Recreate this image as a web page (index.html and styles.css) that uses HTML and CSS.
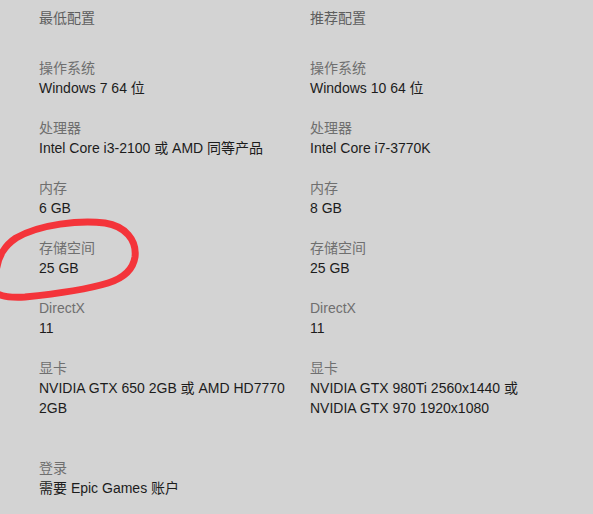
FILE: index.html
```html
<!DOCTYPE html>
<html lang="zh-CN">
<head>
  <meta charset="UTF-8">
  <title>系统要求</title>
  <link rel="stylesheet" href="styles.css">
</head>
<body>

  <div class="specs">
    <div class="col">
      <h3>最低配置</h3>
      <div class="item"><span class="label">操作系统</span><span class="value">Windows 7 64 位</span></div>
      <div class="item"><span class="label">处理器</span><span class="value">Intel Core i3-2100 或 AMD 同等产品</span></div>
      <div class="item"><span class="label">内存</span><span class="value">6 GB</span></div>
      <div class="item"><span class="label">存储空间</span><span class="value">25 GB</span></div>
      <div class="item"><span class="label">DirectX</span><span class="value">11</span></div>
      <div class="item"><span class="label">显卡</span><span class="value">NVIDIA GTX 650 2GB 或 AMD HD7770 2GB</span></div>
    </div>

    <div class="col">
      <h3>推荐配置</h3>
      <div class="item"><span class="label">操作系统</span><span class="value">Windows 10 64 位</span></div>
      <div class="item"><span class="label">处理器</span><span class="value">Intel Core i7-3770K</span></div>
      <div class="item"><span class="label">内存</span><span class="value">8 GB</span></div>
      <div class="item"><span class="label">存储空间</span><span class="value">25 GB</span></div>
      <div class="item"><span class="label">DirectX</span><span class="value">11</span></div>
      <div class="item"><span class="label">显卡</span><span class="value">NVIDIA GTX 980Ti 2560x1440 或<br>NVIDIA GTX 970 1920x1080</span></div>
    </div>

    <div class="item login">
      <span class="label">登录</span>
      <span class="value">需要 Epic Games 账户</span>
    </div>
  </div>

  <!-- hand drawn mark -->
  <svg class="mark" width="150" height="110" viewBox="0 210 150 110">
    <path d="M -4 272 C -2 256, 4 246, 16 238 C 40 224, 80 220, 105 223 C 125 226, 137 240, 135 257 C 133 270, 124 278, 108 283 C 85 290, 55 294, 25 297 C 10 298, 0 296, -6 292"
          fill="none" stroke="#f4343a" stroke-width="7" stroke-linecap="round"/>
  </svg>

</body>
</html>
```

FILE: styles.css
```css
body {
  margin: 0;
  background-color: #d3d3d3;
  font-family: "Liberation Sans", "Noto Sans CJK SC", sans-serif;
  font-size: 14px;
  line-height: 20px;
}

.specs {
  display: grid;
  grid-template-columns: 250px 250px;
  column-gap: 21px;
  padding: 8px 0 0 39px;
}

.col {
  display: flex;
  flex-direction: column;
  gap: 20px;
}

.col h3 {
  margin: 0 0 10px;
  font-size: 14px;
  font-weight: normal;
  color: #5e5e5e;
}

.item {
  display: flex;
  flex-direction: column;
}

.label {
  color: #6f6f6f;
}

.value {
  color: #1c1c1c;
}

.login {
  margin-top: 40px;
}

.mark {
  position: absolute;
  left: 0;
  top: 210px;
}
```
